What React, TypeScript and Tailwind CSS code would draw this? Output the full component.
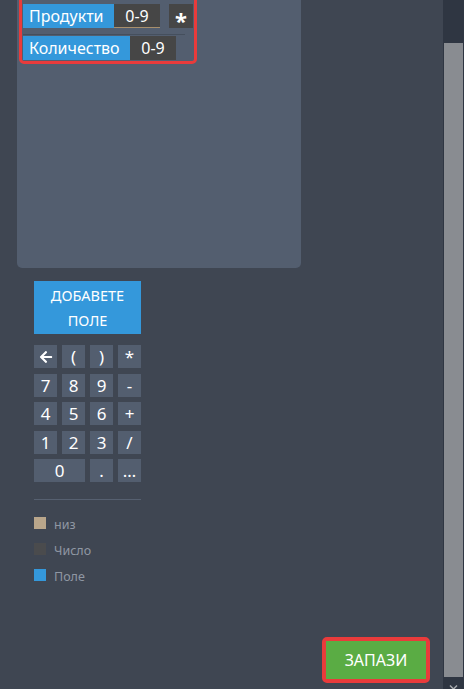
import { FaArrowLeft } from "react-icons/fa";

const font = { fontFamily: '"Noto Sans", "Open Sans", sans-serif' };

const keys: { label: string; wide?: boolean; icon?: boolean }[] = [
  { label: "back", icon: true },
  { label: "(" },
  { label: ")" },
  { label: "*" },
  { label: "7" },
  { label: "8" },
  { label: "9" },
  { label: "-" },
  { label: "4" },
  { label: "5" },
  { label: "6" },
  { label: "+" },
  { label: "1" },
  { label: "2" },
  { label: "3" },
  { label: "/" },
  { label: "0", wide: true },
  { label: "." },
  { label: "…" },
];

const legend = [
  { color: "bg-[#b9a68b]", label: "низ" },
  { color: "bg-[#4a4b4d]", label: "Число" },
  { color: "bg-[#3498db]", label: "Поле" },
];

function FieldRow({ name, width, star }: { name: string; width: string; star?: boolean }) {
  return (
    <div className="flex h-[24px] items-stretch">
      <div className={`${width} flex items-center bg-[#3498db] pl-[6px] text-[16px] text-white`}>{name}</div>
      <div
        className={`flex w-[46px] items-center justify-center bg-[#464646] text-[16px] text-white ${
          star ? "border-b border-[#a88f6c]" : ""
        }`}
      >
        0-9
      </div>
      {star && (
        <div className="ml-[9px] flex w-[24px] items-center justify-center bg-[#464646] text-[22px] font-bold leading-none text-white">
          <span className="mt-[7px]">*</span>
        </div>
      )}
    </div>
  );
}

export default function App() {
  return (
    <div className="flex h-[689px] w-[464px] overflow-hidden bg-[#3f4652]" style={font}>
      {/* Main scroll area */}
      <div className="flex min-w-0 flex-1 flex-col">
        {/* Formula panel */}
        <div className="mx-[17px] h-[268px] w-[284px] shrink-0 overflow-hidden rounded-b-[5px] bg-[#535e6f]">
          <div className="-mt-[6px] ml-[2px] w-[178px] rounded-[5px] border-[3px] border-[#e93b3b] pb-[1px] pl-[1px] pt-[7px]">
            <FieldRow name="Продукти" width="w-[91px]" star />
            <div className="mt-[6px] h-px w-[162px] bg-[#454f5d]" />
            <div className="mt-[1px]">
              <FieldRow name="Количество" width="w-[107px]" />
            </div>
          </div>
        </div>

        {/* Tools */}
        <div className="ml-[34px] w-[107px]">
          <button className="mt-[13px] flex h-[53px] w-[107px] flex-col items-center justify-center bg-[#3498db] text-[14.5px] leading-[25px] text-white">
            <span>ДОБАВЕТЕ</span>
            <span>ПОЛЕ</span>
          </button>

          <div className="mt-[11px] grid grid-cols-4 gap-x-[5px] gap-y-[5.5px]">
            {keys.map((k) => (
              <div
                key={k.label}
                className={`flex h-[23px] items-center justify-center bg-[#535e6f] text-[17px] leading-none text-white ${
                  k.wide ? "col-span-2" : ""
                }`}
              >
                {k.icon ? <FaArrowLeft className="h-[14px] w-[14px]" /> : k.label}
              </div>
            ))}
          </div>

          <div className="mt-[17px] h-px bg-[#566070]" />

          <div className="mt-[17px] flex flex-col">
            {legend.map((l) => (
              <div key={l.label} className="flex h-[26px] items-start gap-[8px]">
                <div className={`h-[12px] w-[12px] ${l.color}`} />
                <span className="mt-[-1px] text-[12.5px] leading-[18px] text-[#8f97a3]">{l.label}</span>
              </div>
            ))}
          </div>
        </div>

        {/* Save */}
        <div className="mb-[6px] mr-[13px] mt-auto self-end rounded-[5px] border-[4px] border-[#e93b3b]">
          <button className="flex h-[38px] w-[100px] items-center justify-center bg-[#5aac44] text-[16px] text-white">
            ЗАПАЗИ
          </button>
        </div>
      </div>

      {/* Scrollbar */}
      <div className="flex w-[21px] shrink-0 flex-col bg-[#2f3642] pl-px pr-px">
        <div className="h-[43px]" />
        <div className="flex-1 bg-[#898c91]" />
        <div className="flex h-[12px] items-end justify-center">
          <svg width="9" height="7" viewBox="0 0 9 7" className="mb-[-2px]">
            <path d="M1 1.5 L4.5 5 L8 1.5" stroke="#a6a9ad" strokeWidth="1.5" fill="none" />
          </svg>
        </div>
      </div>
    </div>
  );
}
